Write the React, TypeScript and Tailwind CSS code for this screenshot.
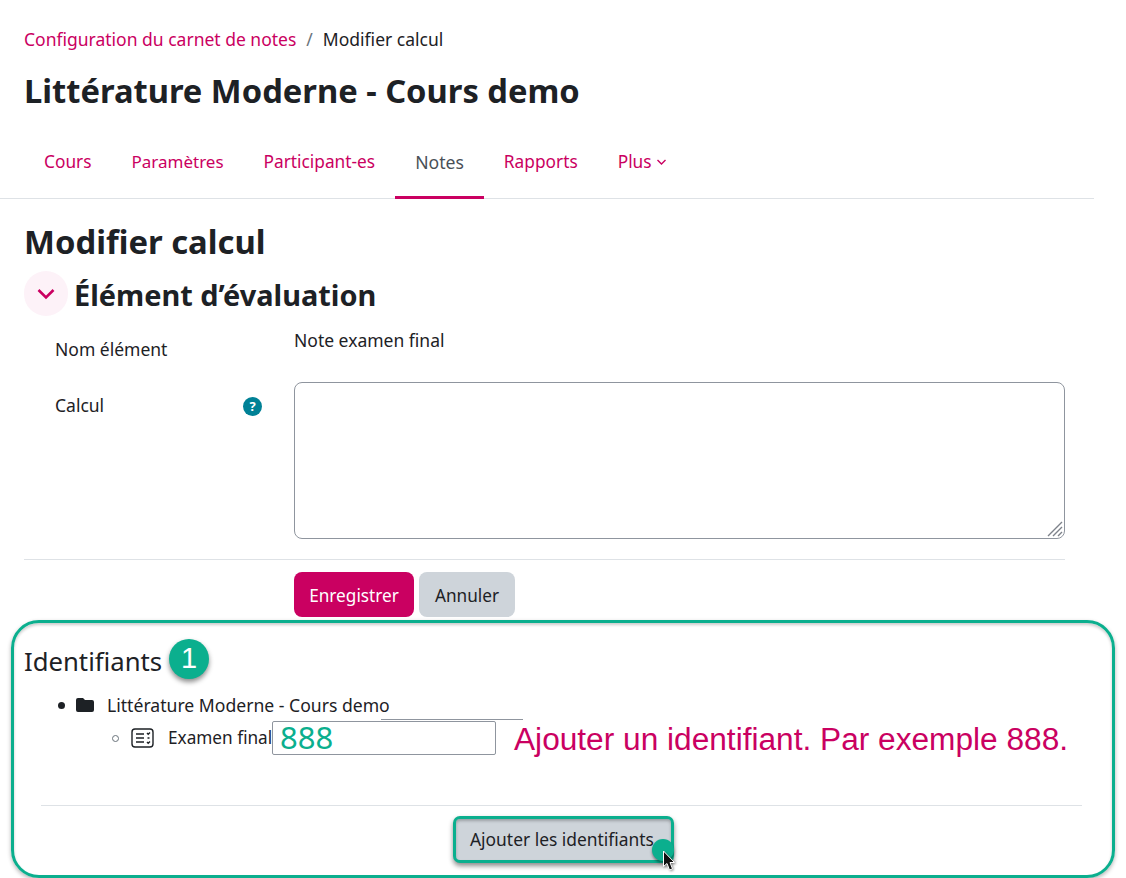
import React from "react";

const Cursor = () => (
  <svg width="14" height="22" viewBox="0 0 14 22" className="absolute left-[662px] top-[850px] drop-shadow-[1px_1px_1px_rgba(0,0,0,0.4)]">
    <path d="M1.5 1 L1.5 16.5 L5 13.5 L7.5 20 L10.5 18.8 L8 12.5 L12.5 12.5 Z" fill="#111" stroke="#fff" strokeWidth="1" />
  </svg>
);

export default function App() {
  return (
    <div className="relative w-[1126px] h-[878px] overflow-hidden bg-white text-[#1d2125] font-['Noto_Sans','Open_Sans',sans-serif] text-[17.5px]">
      <div className="w-[1094px]">
        <div className="px-6 pt-[28px] h-[130px]">
          <div className="flex items-center h-[22px] leading-[22px]">
            <span className="text-[#ca0061]">Configuration du carnet de notes</span>
            <span className="px-[10px] text-[#6a737b]">/</span>
            <span>Modifier calcul</span>
          </div>
          <h1 className="mt-[17px] text-[32.7px] leading-[48px] font-bold">Littérature Moderne - Cours demo</h1>
        </div>
        <nav className="flex h-[69px] border-b border-[#dee2e6] pl-6 text-[#ca0061] text-[17.3px] leading-[26px]">
          <a className="px-5 pt-[19px]">Cours</a>
          <a className="px-5 pt-[19px] text-[17px]">Paramètres</a>
          <a className="px-5 pt-[19px]">Participant-es</a>
          <a className="px-5 pt-[19px] h-[69px] text-[#495057] text-[17.6px] border-b-[3px] border-[#ca0061]">Notes</a>
          <a className="px-5 pt-[19px]">Rapports</a>
          <a className="px-5 pt-[19px] flex items-start gap-[4px]">
            Plus
            <svg width="11" height="10" viewBox="0 0 11 10" className="mt-[8px]" fill="none" stroke="#ca0061" strokeWidth="1.4"><path d="M1.5 3 L5.5 7 L9.5 3" /></svg>
          </a>
        </nav>
      </div>

      <main className="px-6 w-[1089px]">
        <h2 className="mt-[20px] text-[32.8px] leading-[46px] font-bold">Modifier calcul</h2>
        <div className="flex items-center h-[45px] mt-[6px]">
          <span className="flex items-center justify-center w-[44px] h-[45px] rounded-full bg-[#fdf2f8]">
            <svg width="20" height="12" viewBox="0 0 20 12" fill="none" stroke="#ca0061" strokeWidth="2.6"><path d="M2.5 2 L10 9.5 L17.5 2" /></svg>
          </span>
          <h3 className="ml-[6px] pt-[2px] text-[28.9px] leading-[46px] font-bold">Élément d’évaluation</h3>
        </div>

        <div className="flex mt-[12px] h-[54px]">
          <div className="w-[270px] pl-[31px] pt-[10px] leading-[22px]">Nom élément</div>
          <div className="leading-[24px]">Note examen final</div>
        </div>
        <div className="flex h-[157px]">
          <div className="w-[270px] pl-[31px] pt-[12px] leading-[22px] flex justify-between pr-[32px]">
            Calcul
            <span className="mt-[3px] w-[19px] h-[19px] rounded-full bg-[#008196] text-white text-[13px] leading-[19px] font-bold text-center">?</span>
          </div>
          <div className="relative w-[771px] h-[157px] border border-[#8f959e] rounded-[8px]">
            <svg width="18" height="18" viewBox="0 0 18 18" className="absolute right-0 bottom-0" stroke="#7d828a" strokeWidth="1.4">
              <path d="M2 16 L16 2 M7 16 L16 7 M12 16 L16 12" />
            </svg>
          </div>
        </div>
        <div className="mt-[20px] border-t border-[#dee2e6]" />
        <div className="flex gap-[5px] pl-[270px] mt-[12px]">
          <button className="w-[120px] h-[45px] rounded-[8px] bg-[#ca0061] text-white text-[17.2px] leading-[47px]">Enregistrer</button>
          <button className="w-[96px] h-[45px] rounded-[8px] bg-[#ced4da] text-[17.2px] leading-[47px]">Annuler</button>
        </div>
        <h4 className="mt-[27px] text-[25.7px] leading-[36px] font-normal">Identifiants</h4>
      </main>

      <ul className="absolute left-0 top-[693px] w-[540px]">
        <li className="flex items-center h-[24px]">
          <span className="ml-[58px] w-[7px] h-[7px] rounded-full bg-[#1d2125]" />
          <svg width="20" height="18" viewBox="0 0 20 18" className="ml-[10px]" fill="#1d2125"><path d="M1 4 a2 2 0 0 1 2-2 h5 l2 2 h7 a2 2 0 0 1 2 2 v8 a2 2 0 0 1-2 2 H3 a2 2 0 0 1-2-2 Z" /></svg>
          <span className="ml-[12px] text-[17.6px]">Littérature Moderne - Cours demo</span>
        </li>
        <li className="flex items-center h-[34px] mt-[4px]">
          <span className="ml-[112px] w-[7px] h-[7px] rounded-full border border-[#6a737b]" />
          <svg width="24" height="22" viewBox="0 0 24 22" className="ml-[12px]" fill="none" stroke="#1d2125" strokeWidth="1.4">
            <rect x="1" y="2" width="21" height="18" rx="3" />
            <path d="M5 7 H13 M5 11 H13 M5 15 H13 M16 6 l1.2 1.2 L19 5.5 M16.5 11 h2 M16 15 l1.2 1.2 L19 14.5" />
          </svg>
          <span className="ml-[13px] w-[104px] whitespace-nowrap text-[17.2px]">Examen final</span>
          <span className="w-[224px] h-[34px] pl-[7px] border border-[#8f959e] rounded-[2px] text-[#0baf8e] text-[31px] leading-[31px]">888</span>
        </li>
      </ul>
      <div className="absolute left-[381px] top-[719px] w-[142px] h-px bg-[#8f959e]" />
      <div className="absolute left-[514px] top-[719px] whitespace-nowrap text-[#ca0061] text-[31.65px] leading-[40px] font-['Liberation_Sans',sans-serif]">Ajouter un identifiant. Par exemple 888.</div>

      <div className="absolute left-[41px] top-[805px] w-[1041px] h-px bg-[#dee2e6]" />

      {/* annotation frame */}
      <div className="absolute left-[11px] top-[620px] w-[1104px] h-[258px] rounded-[28px] border-[3px] border-[#0baf8e] shadow-[0_2px_4px_rgba(0,0,0,0.3),inset_0_2px_3px_rgba(0,0,0,0.2)]" />
      <div className="absolute left-[169px] top-[639px] w-[40px] h-[40px] rounded-full bg-[#0baf8e] text-white text-[29px] leading-[39px] text-center font-['Liberation_Sans',sans-serif] shadow-[0_3px_5px_rgba(0,0,0,0.45)]">1</div>

      <div className="absolute left-[453px] top-[816px] w-[221px] h-[47px] rounded-[7px] border-[3px] border-[#0baf8e] bg-[#ced4da] pl-[14px] leading-[41px] text-[17.4px] shadow-[0_3px_5px_rgba(0,0,0,0.45),inset_0_2px_3px_rgba(0,0,0,0.25)] whitespace-nowrap">Ajouter les identifiants</div>
      <div className="absolute left-[652px] top-[839px] w-[22px] h-[22px] rounded-full bg-[#0baf8e] shadow-[0_2px_3px_rgba(0,0,0,0.45)]" />
      <Cursor />
    </div>
  );
}
